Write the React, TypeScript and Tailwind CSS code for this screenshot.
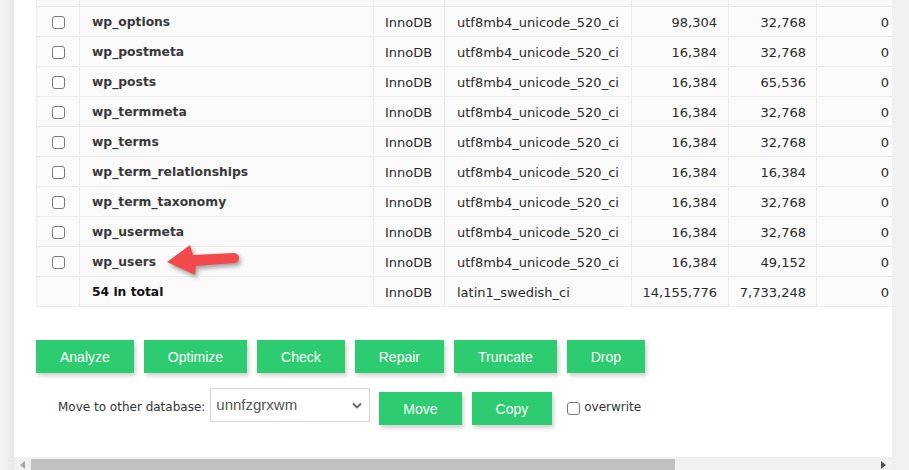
import React from "react";

type TableRow = {
  name: string;
  engine: string;
  collation: string;
  data: string;
  index: string;
  free: string;
};

const rows: TableRow[] = [
  { name: "wp_options", engine: "InnoDB", collation: "utf8mb4_unicode_520_ci", data: "98,304", index: "32,768", free: "0" },
  { name: "wp_postmeta", engine: "InnoDB", collation: "utf8mb4_unicode_520_ci", data: "16,384", index: "32,768", free: "0" },
  { name: "wp_posts", engine: "InnoDB", collation: "utf8mb4_unicode_520_ci", data: "16,384", index: "65,536", free: "0" },
  { name: "wp_termmeta", engine: "InnoDB", collation: "utf8mb4_unicode_520_ci", data: "16,384", index: "32,768", free: "0" },
  { name: "wp_terms", engine: "InnoDB", collation: "utf8mb4_unicode_520_ci", data: "16,384", index: "32,768", free: "0" },
  { name: "wp_term_relationships", engine: "InnoDB", collation: "utf8mb4_unicode_520_ci", data: "16,384", index: "16,384", free: "0" },
  { name: "wp_term_taxonomy", engine: "InnoDB", collation: "utf8mb4_unicode_520_ci", data: "16,384", index: "32,768", free: "0" },
  { name: "wp_usermeta", engine: "InnoDB", collation: "utf8mb4_unicode_520_ci", data: "16,384", index: "32,768", free: "0" },
  { name: "wp_users", engine: "InnoDB", collation: "utf8mb4_unicode_520_ci", data: "16,384", index: "49,152", free: "0" },
];

const actions = ["Analyze", "Optimize", "Check", "Repair", "Truncate", "Drop"];

const cell = "shrink-0 flex items-center pt-[2px] border-b border-r border-[#ececec] bg-[#fafafa]";

const Checkbox = () => (
  <span className="block w-[13px] h-[13px] rounded-[3px] border border-[#7a7a7a] bg-white" />
);

const Row = ({ row, total }: { row: TableRow; total?: boolean }) => (
  <div className="flex h-[30px]">
    <div className={`${cell} w-[44px] justify-center border-l`}>{!total && <Checkbox />}</div>
    <div
      className={`${cell} w-[294px] px-[12px] font-bold text-[12.3px] ${
        total ? "text-[#111]" : "text-[#383838]"
      }`}
    >
      {row.name}
    </div>
    <div className={`${cell} w-[71px] px-[11px]`}>{row.engine}</div>
    <div className={`${cell} w-[187px] px-[12px]`}>{row.collation}</div>
    <div className={`${cell} w-[97px] justify-end pr-[11px]`}>{row.data}</div>
    <div className={`${cell} w-[88px] justify-end pr-[10px]`}>{row.index}</div>
    <div className={`${cell} w-[83px] justify-end pr-[10px]`}>{row.free}</div>
    <div className={`${cell} w-[120px]`} />
  </div>
);

const GreenButton = ({ label, className = "" }: { label: string; className?: string }) => (
  <button
    className={`h-[33px] px-6 pt-[1px] bg-[#2ecc71] text-white text-[14px] font-['Liberation_Sans',Arial,sans-serif] shadow-[2px_3px_4px_rgba(0,0,0,0.18)] ${className}`}
  >
    {label}
  </button>
);

export default function App() {
  return (
    <div className="flex h-[470px] w-[909px] overflow-hidden font-['DejaVu_Sans',Verdana,sans-serif] text-[13px] text-[#2a2a2a]">
      <div className="w-[14px] shrink-0 bg-gradient-to-r from-[#f5f5f5] to-[#e8e8e8]" />

      <div className="relative flex w-[878px] shrink-0 flex-col overflow-hidden bg-white">
        <div className="flex-1">
          <div className="ml-[22px]">
            <div className="flex h-[7px]">
              <div className={`${cell} w-[44px] border-l`} />
              <div className={`${cell} w-[294px]`} />
              <div className={`${cell} w-[71px]`} />
              <div className={`${cell} w-[187px]`} />
              <div className={`${cell} w-[97px]`} />
              <div className={`${cell} w-[88px]`} />
              <div className={`${cell} w-[83px]`} />
              <div className={`${cell} w-[120px]`} />
            </div>
            {rows.map((r) => (
              <Row key={r.name} row={r} />
            ))}
            <Row
              total
              row={{
                name: "54 in total",
                engine: "InnoDB",
                collation: "latin1_swedish_ci",
                data: "14,155,776",
                index: "7,733,248",
                free: "0",
              }}
            />
          </div>

          <div className="mt-[33px] ml-[22px] flex gap-[10px]">
            {actions.map((a) => (
              <GreenButton key={a} label={a} />
            ))}
          </div>

          <div className="mt-[15px] flex items-start pl-[44px] text-[12px]">
            <span className="mt-[12px] leading-[14px] text-[#333]">Move to other database:</span>
            <div className="ml-[5px] flex h-[34px] w-[160px] items-center justify-between border border-[#d6d6d6] bg-white pl-[5px] pr-[7px]">
              <span className="font-['Liberation_Sans',Arial,sans-serif] text-[15px] text-[#555]">unnfzgrxwm</span>
              <svg width="10" height="7" viewBox="0 0 10 7">
                <path d="M1 1.5 L5 5.5 L9 1.5" fill="none" stroke="#666" strokeWidth="1.8" />
              </svg>
            </div>
            <GreenButton label="Move" className="ml-[9px] mt-[4px]" />
            <GreenButton label="Copy" className="ml-[10px] mt-[4px]" />
            <span className="ml-[15px] mt-[14px]">
              <Checkbox />
            </span>
            <span className="ml-[4px] mt-[12px] leading-[14px] text-[#333]">overwrite</span>
          </div>
        </div>

        <div className="flex h-[13px] shrink-0 bg-[#f1f1f1]">
          <div className="flex w-[17px] items-center justify-center pt-[2px]">
            <svg width="5" height="8" viewBox="0 0 5 8">
              <path d="M5 0 L0 4 L5 8 Z" fill="#a3a3a3" />
            </svg>
          </div>
          <div className="mt-[2px] w-[644px] bg-[#c1c1c1]" />
          <div className="flex-1" />
          <div className="flex w-[17px] items-center justify-center pt-[2px]">
            <svg width="5" height="8" viewBox="0 0 5 8">
              <path d="M0 0 L5 4 L0 8 Z" fill="#505050" />
            </svg>
          </div>
        </div>

        <svg
          className="absolute left-[136px] top-[240px] drop-shadow-[2px_3px_2px_rgba(0,0,0,0.35)]"
          width="100"
          height="45"
          viewBox="0 0 100 45"
        >
          <path
            d="M17 22 L40 5 L43 15 L83 13 A5 5 0 0 1 85 23 L46 26 L45 35 Z"
            fill="#f24a4c"
          />
        </svg>
      </div>

      <div className="w-[17px] shrink-0 bg-[#f0f0f0]" />
    </div>
  );
}
